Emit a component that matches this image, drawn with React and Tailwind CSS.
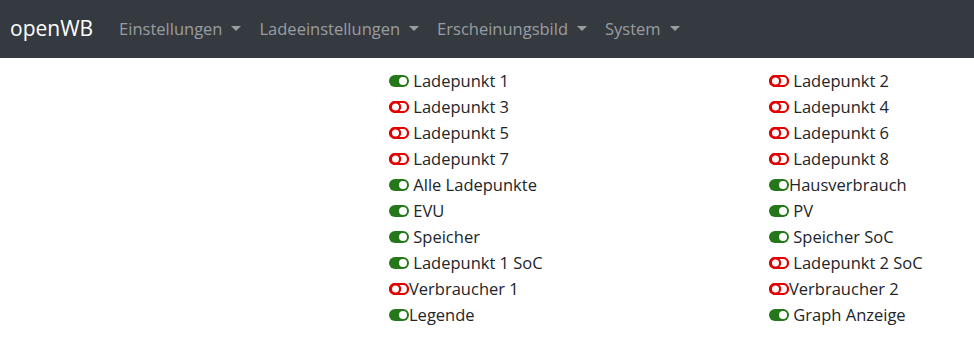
import React from "react";

function ToggleOn() {
  return (
    <svg width="20" height="12" viewBox="0 0 20 12" className="inline-block shrink-0">
      <rect x="0" y="0" width="20" height="12" rx="6" fill="#24781a" />
      <circle cx="14" cy="6" r="4" fill="#ffffff" />
    </svg>
  );
}

function ToggleOff() {
  return (
    <svg width="20" height="12" viewBox="0 0 20 12" className="inline-block shrink-0">
      <rect x="1" y="1" width="18" height="10" rx="5" fill="none" stroke="#e30000" strokeWidth="2.2" />
      <circle cx="6.5" cy="6" r="4.6" fill="none" stroke="#e30000" strokeWidth="2.2" />
    </svg>
  );
}

function Item({ on, label, space = true }) {
  return (
    <div className="flex items-center h-[26px] whitespace-pre">
      {on ? <ToggleOn /> : <ToggleOff />}
      <span>{space ? " " + label : label}</span>
    </div>
  );
}

function Caret() {
  return (
    <span className="inline-block ml-[9px] w-0 h-0 border-l-[5px] border-r-[5px] border-t-[5px] border-l-transparent border-r-transparent border-t-[#9a9da0] relative top-[-1px]"></span>
  );
}

const left = [
  [true, "Ladepunkt 1", true],
  [false, "Ladepunkt 3", true],
  [false, "Ladepunkt 5", true],
  [false, "Ladepunkt 7", true],
  [true, "Alle Ladepunkte", true],
  [true, "EVU", true],
  [true, "Speicher", true],
  [true, "Ladepunkt 1 SoC", true],
  [false, "Verbraucher 1", false],
  [true, "Legende", false],
];

const right = [
  [false, "Ladepunkt 2", true],
  [false, "Ladepunkt 4", true],
  [false, "Ladepunkt 6", true],
  [false, "Ladepunkt 8", true],
  [true, "Hausverbrauch", false],
  [true, "PV", true],
  [true, "Speicher SoC", true],
  [false, "Ladepunkt 2 SoC", true],
  [false, "Verbraucher 2", false],
  [true, "Graph Anzeige", true],
];

export default function App() {
  const font = { fontFamily: '"Segoe UI", "Open Sans", "Noto Sans", sans-serif' };
  return (
    <div className="w-[974px] h-[364px] bg-white text-[#212529] overflow-hidden" style={font}>
      <nav className="h-[58px] bg-[#343a40] flex items-center pl-[10px]">
        <span className="text-white text-[21px] mr-[17px]">openWB</span>
        <div className="flex items-center text-[16.5px] text-[#9a9da0]">
          <span className="px-[9px] flex items-center">Einstellungen<Caret /></span>
          <span className="px-[9px] flex items-center">Ladeeinstellungen<Caret /></span>
          <span className="px-[9px] flex items-center">Erscheinungsbild<Caret /></span>
          <span className="px-[9px] flex items-center">System<Caret /></span>
        </div>
      </nav>
      <div className="pl-[389px] pt-[10px] grid grid-cols-[380px_1fr] text-[16.5px]">
        <div className="flex flex-col">
          {left.map(([on, l, s]) => (
            <Item key={l} on={on} label={l} space={s} />
          ))}
        </div>
        <div className="flex flex-col">
          {right.map(([on, l, s]) => (
            <Item key={l} on={on} label={l} space={s} />
          ))}
        </div>
      </div>
    </div>
  );
}
